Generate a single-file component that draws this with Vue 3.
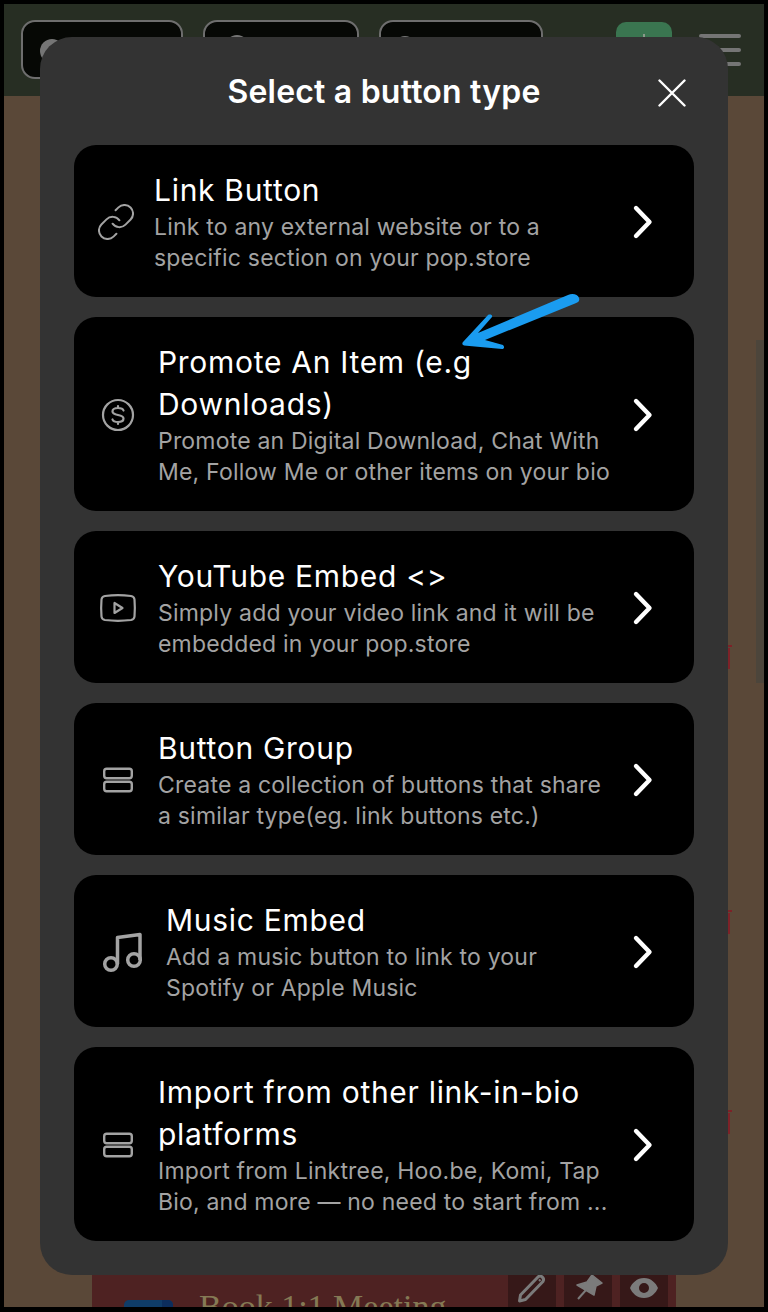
<script setup>
const options = [
  { id: 'link', icon: 'link', title: ['Link Button'], desc: ['Link to any external website or to a', 'specific section on your pop.store'] },
  { id: 'promote', icon: 'dollar', title: ['Promote An Item (e.g', 'Downloads)'], desc: ['Promote an Digital Download, Chat With', 'Me, Follow Me or other items on your bio'] },
  { id: 'youtube', icon: 'youtube', title: ['YouTube Embed <>'], desc: ['Simply add your video link and it will be', 'embedded in your pop.store'] },
  { id: 'group', icon: 'group', title: ['Button Group'], desc: ['Create a collection of buttons that share', 'a similar type(eg. link buttons etc.)'] },
  { id: 'music', icon: 'music', title: ['Music Embed'], desc: ['Add a music button to link to your', 'Spotify or Apple Music'] },
  { id: 'import', icon: 'group', title: ['Import from other link-in-bio', 'platforms'], desc: ['Import from Linktree, Hoo.be, Komi, Tap', 'Bio, and more — no need to start from ...'] },
]
const redMarks = [645, 910, 1110]
</script>

<template>
  <div class="screen">
    <div class="topbar">
      <div class="tab tab-a"><span class="tab-dot"></span></div>
      <div class="tab tab-b"><span class="tab-dot"></span></div>
      <div class="tab tab-c"><span class="tab-dot"></span></div>
      <div class="plus"><i></i></div>
      <div class="burger"><i></i><i></i><i></i></div>
    </div>

    <div class="page">
      <span v-for="top in redMarks" :key="top" class="red-mark" :style="{ top: top - 4 + 'px' }"></span>
      <div class="scroll-thumb"></div>
      <div class="booking">
        <div class="booking-tools">
          <span class="tool">
            <svg width="30" height="30" viewBox="0 0 30 30" fill="none" stroke="#7b7b7b" stroke-width="3" stroke-linejoin="round"><path d="M2.500 28 3.500 22 21 4c2.500-2.500 7 1 5 4.500L8.500 26.500z"/><path d="M22 6.500l1.500 1.500" stroke-width="2"/></svg>
          </span>
          <span class="tool">
            <svg width="30" height="30" viewBox="0 0 30 30" fill="#7b7b7b" stroke="#7b7b7b" stroke-width="1.500" stroke-linejoin="round"><path d="M19 2l10 8-6 3-2 9-17-10 10-3z"/><path d="M13 17l-8 9" fill="none" stroke-width="2"/></svg>
          </span>
          <span class="tool">
            <svg width="30" height="24" viewBox="0 0 30 24" fill="#7b7b7b"><path fill-rule="evenodd" d="M15 2c7 0 12 5 14 10-2 5-7 10-14 10S3 17 1 12C3 7 8 2 15 2zm0 5a5 5 0 1 0 0 10 5 5 0 0 0 0-10z"/></svg>
          </span>
        </div>
        <div class="booking-row">
          <span class="booking-thumb"><i></i></span>
          <span class="booking-name">Book 1:1 Meeting</span>
        </div>
      </div>
    </div>

    <div class="modal">
      <div class="modal-head">
        <h2>Select a button type</h2>
        <svg class="close" width="28" height="28" viewBox="0 0 28 28" fill="none" stroke="#fff" stroke-width="2.400" stroke-linecap="round"><path d="M1.500 1.500l25 25M26.500 1.500l-25 25"/></svg>
      </div>

      <div class="cards">
        <div v-for="opt in options" :key="opt.id" class="card">
          <span class="card-icon">
            <svg v-if="opt.icon === 'link'" width="36" height="36" viewBox="1.500 1.500 21 21" fill="none" stroke="#a3a3a3" stroke-width="1.150" stroke-linecap="round" stroke-linejoin="round"><path d="M10 13a5 5 0 0 0 7.540.54l3-3a5 5 0 0 0-7.070-7.070l-1.720 1.710"/><path d="M14 11a5 5 0 0 0-7.540-.54l-3 3a5 5 0 0 0 7.070 7.070l1.710-1.710"/></svg>
            <svg v-else-if="opt.icon === 'dollar'" width="40" height="40" viewBox="0 0 40 40" fill="none" stroke="#a3a3a3" stroke-width="2.200" stroke-linecap="round" stroke-linejoin="round"><circle cx="20" cy="20" r="15"/><path d="M25.500 15.500c-.5-1.500-2.500-2.500-5.500-2.500-3.200 0-5.500 1.400-5.500 3.500 0 4.800 11 2.200 11 7 0 2.100-2.300 3.500-5.500 3.500-3 0-5-1-5.500-2.500M20 11v2M20 27v2"/></svg>
            <svg v-else-if="opt.icon === 'youtube'" width="40" height="40" viewBox="0 0 40 40" fill="none" stroke="#a3a3a3" stroke-width="2.200" stroke-linejoin="round"><path d="M7 8c8-1 18-1 26 0 2 .3 3.300 1.700 3.500 3.500.5 6 .5 11 0 17-.2 1.800-1.500 3.200-3.500 3.500-8 1-18 1-26 0-2-.3-3.300-1.700-3.500-3.500-.5-6-.5-11 0-17C3.700 9.700 5 8.300 7 8z"/><path d="M16.500 15v10l8-5z"/></svg>
            <svg v-else-if="opt.icon === 'group'" width="40" height="40" viewBox="0 0 40 40" fill="none" stroke="#a3a3a3" stroke-width="2.400" stroke-linejoin="round"><rect x="6.200" y="8.700" width="27.600" height="9.500" rx="2.500"/><rect x="6.200" y="21.800" width="27.600" height="9.500" rx="2.500"/></svg>
            <svg v-else width="48" height="48" viewBox="0 0 48 48" fill="none" stroke="#a3a3a3" stroke-width="3.500" stroke-linejoin="round"><path d="M19.500 36V9.500L42 6.500V32"/><circle cx="13" cy="36" r="6.300"/><circle cx="36" cy="32" r="6.300"/></svg>
          </span>
          <div class="card-text">
            <div class="card-title"><div v-for="line in opt.title" :key="line">{{ line }}</div></div>
            <div class="card-desc"><div v-for="line in opt.desc" :key="line">{{ line }}</div></div>
          </div>
          <svg class="chevron" width="22" height="36" viewBox="0 0 22 36" fill="none" stroke="#fff" stroke-width="4.400" stroke-linecap="round" stroke-linejoin="round"><path d="M4 4l13.500 14L4 32"/></svg>
        </div>
      </div>
    </div>

    <svg class="arrow" width="124" height="62" viewBox="0 0 124 62" fill="#1a9cf0"><path d="M108 5C112 3 118 4 119 8 120 11 118 12.500 115 13.500L25 50 43 55C45 57 44 59 42 59L4 55.500C2 55 2 53 3 52L28 25C30 24 33 25 32 27L18 43z"/></svg>
  </div>
</template>

<style scoped>
.screen {
  position: relative;
  box-sizing: border-box;
  width: 768px;
  height: 1312px;
  overflow: hidden;
  display: flex;
  flex-direction: column;
  border: solid #000;
  border-width: 4px 4px 5px;
  background: #5a4838;
  font-family: Inter, "Liberation Sans", sans-serif;
}

.topbar {
  flex: none;
  box-sizing: border-box;
  height: 92px;
  display: flex;
  align-items: flex-start;
  padding: 16px 22px 0 17px;
  background: #272e23;
}
.tab {
  box-sizing: border-box;
  height: 59px;
  margin-right: 20px;
  border: 2px solid #6e6e6e;
  border-radius: 14px;
  background: #060805;
}
.tab-a { width: 162px; padding: 17px 0 0 17px; }
.tab-b { width: 156px; padding: 13px 0 0 20px; }
.tab-c { width: 164px; padding: 14px 0 0 12px; }
.tab-dot {
  display: block;
  width: 24px;
  height: 24px;
  border-radius: 50%;
  background: #757575;
}
.plus {
  display: flex;
  justify-content: center;
  width: 56px;
  height: 50px;
  margin: 2px 0 0 53px;
  padding-top: 12px;
  box-sizing: border-box;
  border-radius: 10px;
  background: #3a7550;
}
.plus i {
  width: 2px;
  height: 16px;
  background: #8a9a8a;
}
.burger {
  display: flex;
  flex-direction: column;
  gap: 10px;
  width: 42px;
  margin: 14px 0 0 27px;
}
.burger i {
  display: block;
  height: 4px;
  border-radius: 2px;
  background: #757575;
}

.page {
  flex: 1;
  display: flex;
  flex-direction: column;
  justify-content: flex-end;
  padding: 0 88px;
}
.red-mark {
  position: absolute;
  left: 724px;
  width: 2px;
  height: 21px;
  margin-top: 3px;
  background: #7d2228;
}
.red-mark::before {
  content: "";
  position: absolute;
  top: -3px;
  left: 0;
  width: 4px;
  height: 2px;
  background: #7d2228;
}
.scroll-thumb {
  position: absolute;
  top: 336px;
  right: 0;
  width: 8px;
  height: 343px;
  background: #4c453b;
}
.booking {
  position: relative;
  height: 80px;
  overflow: hidden;
  background: #4e2222;
}
.booking-tools {
  position: absolute;
  right: 8px;
  bottom: 0;
  display: flex;
  gap: 8px;
}
.tool {
  display: flex;
  justify-content: center;
  align-items: center;
  box-sizing: border-box;
  width: 48px;
  height: 50px;
  padding-top: 12px;
  background: #361818;
}
.booking-row {
  display: flex;
  align-items: flex-start;
  gap: 26px;
  padding: 58px 0 0 32px;
}
.booking-thumb {
  flex: none;
  display: flex;
  justify-content: flex-end;
  width: 49px;
  height: 44px;
  margin-top: 15px;
  overflow: hidden;
  border-radius: 5px;
  background: #0f3c68;
}
.booking-thumb i {
  width: 11px;
  background: #0c2d5c;
}
.booking-name {
  font: 34px/44px "Liberation Serif", serif;
  white-space: nowrap;
  color: #857a55;
}

.modal {
  position: absolute;
  left: 36px;
  top: 33px;
  width: 688px;
  height: 1238px;
  box-sizing: border-box;
  padding: 0 34px;
  border-radius: 32px;
  background: #333333;
  display: flex;
  flex-direction: column;
}
.modal-head {
  position: relative;
  flex: none;
  height: 108px;
  display: flex;
  align-items: center;
  justify-content: center;
}
.modal-head h2 {
  margin: 0;
  font-size: 32px;
  font-weight: 600;
  letter-spacing: 0.2px;
  color: #fff;
}
.close {
  position: absolute;
  top: 42px;
  right: 8px;
}

.cards {
  display: flex;
  flex-direction: column;
  gap: 20px;
}
.card {
  box-sizing: border-box;
  display: flex;
  align-items: center;
  gap: 20px;
  padding: 24px 40px 23px 24px;
  border-radius: 22px;
  background: #000;
}
.card-icon {
  flex: none;
  display: flex;
  align-items: center;
  justify-content: center;
}
.card-text {
  flex: 1;
  white-space: nowrap;
}
.card-title {
  font-size: 30px;
  line-height: 42px;
  letter-spacing: 0.7px;
  color: #fff;
}
.card-desc {
  margin-top: 1px;
  font-size: 23px;
  line-height: 31px;
  letter-spacing: 0.2px;
  color: #a3a3a3;
}
.chevron {
  flex: none;
}
.arrow {
  position: absolute;
  left: 456px;
  top: 286px;
}
</style>
